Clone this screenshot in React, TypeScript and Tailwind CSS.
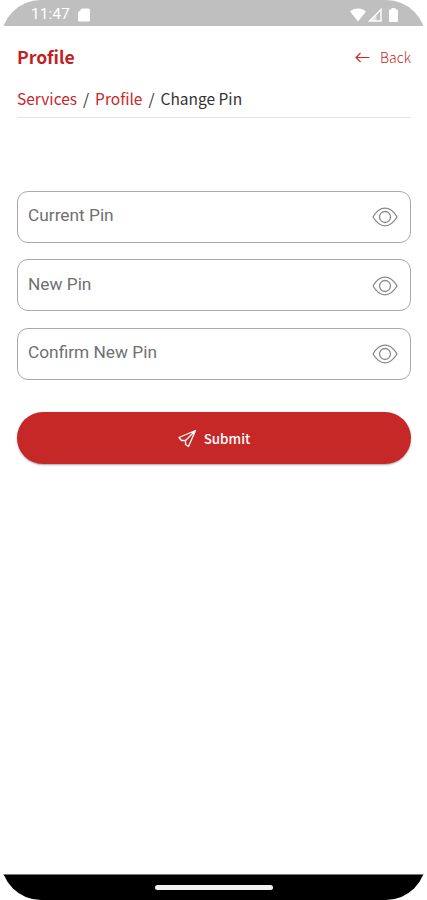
import React from "react";

const EyeIcon: React.FC = () => (
  <svg className="mt-px" width="26" height="20" viewBox="0 0 26 20" fill="none" stroke="#8a8a8a" strokeWidth="1.300">
    <path d="M1 10C4.500 4.200 8.500 1.200 13 1.200S21.500 4.200 25 10C21.500 15.800 17.500 18.800 13 18.800S4.500 15.800 1 10Z" />
    <circle cx="13" cy="10" r="5.500" />
  </svg>
);

const StatusBar: React.FC = () => (
  <div className="flex h-[26px] items-center justify-between bg-[#bfbfbf] pr-[28px] pl-[30px] pt-[3px] text-white">
    <div className="flex items-center gap-[8px]">
      <span className="font-[Roboto,sans-serif] text-[15.5px] leading-none">11:47</span>
      <svg width="12" height="14" viewBox="0 0 12 14" fill="currentColor">
        <path d="M4 0.500H10.500Q12 0.500 12 2V12Q12 13.500 10.500 13.500H1.500Q0 13.500 0 12V4.500Z" />
      </svg>
    </div>
    <div className="flex items-center">
      <svg width="16" height="14" viewBox="0 0 16 14" fill="currentColor">
        <path d="M0 3.500C4 -0.500 12 -0.500 16 3.500L8 13.500Z" />
      </svg>
      <svg className="ml-[2px]" width="14" height="14" viewBox="0 0 14 14" fill="none">
        <path d="M1.500 13L13 1.500V13Z" stroke="currentColor" strokeWidth="1.400" />
        <path d="M1.500 13L8.500 6V13Z" fill="currentColor" fillOpacity="0.600" />
      </svg>
      <svg className="ml-[7px]" width="9" height="14" viewBox="0 0 9 14" fill="currentColor">
        <path d="M2.500 0H6.500V1.500H8Q9 1.500 9 2.500V13Q9 14 8 14H1Q0 14 0 13V2.500Q0 1.500 1 1.500H2.500Z" />
      </svg>
    </div>
  </div>
);

const PinField: React.FC<{ label: string }> = ({ label }) => (
  <div className="flex h-[52px] items-center justify-between rounded-[11px] border border-[#a9a9a9] pr-3 pl-[10px]">
    <span className="pb-px font-[Roboto,sans-serif] text-[17.3px] leading-none text-[#707070]">{label}</span>
    <EyeIcon />
  </div>
);

const App: React.FC = () => {
  return (
    <div className="h-[900px] w-[427px] bg-white px-px font-['Noto_Sans_CJK_SC',sans-serif]">
      <div className="flex h-full flex-col overflow-hidden rounded-[40px] bg-white">
        <StatusBar />
        <main className="flex-1 pr-[15px] pl-[16px]">
          <div className="mt-[17px] flex h-7 items-center justify-between text-[#c62828]">
            <h1 className="text-[17.6px] leading-7 font-bold text-[#c01f24]">Profile</h1>
            <div className="flex items-center gap-[10px]">
              <svg width="15" height="12" viewBox="0 0 15 12" fill="none" stroke="currentColor" strokeWidth="1.100">
                <path d="M14.500 6.500H1M5.500 2L1 6.500L5.500 11" />
              </svg>
              <span className="text-[14px] leading-7 font-light">Back</span>
            </div>
          </div>
          <nav className="mt-[10px] flex h-[37px] gap-[6px] border-b border-[#e4e4e4] text-[15.5px] leading-[34px] text-[#333]">
            <span className="text-[#c62828]">Services</span>
            <span>/</span>
            <span className="text-[#c62828]">Profile</span>
            <span>/</span>
            <span>Change Pin</span>
          </nav>
          <div className="mt-[72.500px] flex flex-col gap-[16.500px]">
            <PinField label="Current Pin" />
            <PinField label="New Pin" />
            <PinField label="Confirm New Pin" />
          </div>
          <button className="mt-[32.500px] flex h-[52px] w-full items-center justify-center gap-[7px] rounded-full bg-[#c62828] text-[13.4px] font-medium text-white shadow-[0_1px_2px_rgba(0,0,0,0.35)]">
            <svg width="19" height="19" viewBox="0 0 19 19" fill="none" stroke="currentColor" strokeWidth="1.300" strokeLinejoin="round">
              <path d="M17.500 1.500L1 8.500L3.500 11.500L7.500 11.500L7.500 15.500L10.500 17.500ZM17.500 1.500L7.500 11.500" />
            </svg>
            <span>Submit</span>
          </button>
        </main>
        <div className="flex h-[26px] items-center justify-center border-t border-[#777] bg-black">
          <div className="h-[5px] w-[118px] rounded-full bg-[#f2f2f2]" />
        </div>
      </div>
    </div>
  );
};

export default App;
